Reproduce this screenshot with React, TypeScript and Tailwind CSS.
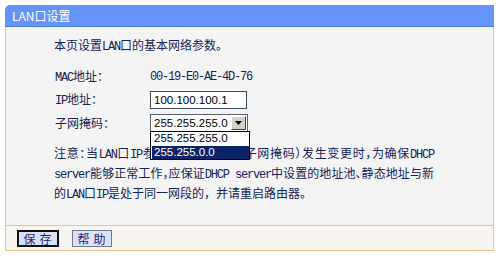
const L = ({ children }: { children: React.ReactNode }) => (
  <span className="font-['Liberation_Mono'] tracking-[-1.2px]">{children}</span>
)

export default function App() {
  return (
    <div className="w-[500px] h-[256px] bg-white pt-[5px] pl-[5px] font-['Noto_Sans_CJK_SC',sans-serif] text-[12px] text-[#14235a] [text-autospace:no-autospace]">
      <div className="w-[489px] flex flex-col">
        {/* 标题栏 */}
        <div className="h-[22px] bg-[#6494f9] rounded-tl-[5px] border-b border-[#4f7fe0] pl-[7px] leading-[21px] text-white text-[12px]">
          LAN口设置
        </div>

        {/* 内容 */}
        <div className="h-[198px] bg-[#f4f4f4] border-l border-r border-[#e9c48e] pl-[48px] pt-[9px]">
          <div className="h-[18px] leading-[18px]">
            本页设置<L>LAN</L>口的基本网络参数。
          </div>

          <div className="mt-[11px] flex flex-col">
            <div className="h-[23px] flex items-center">
              <div className="w-[96px] pl-[1px]"><L>MAC</L>地址：</div>
              <L>00-19-E0-AE-4D-76</L>
            </div>
            <div className="h-[23px] flex items-center">
              <div className="w-[96px] pl-[1px]"><L>IP</L>地址：</div>
              <div className="w-[97px] h-[18px] border border-[#3c4a5c] bg-white pl-[3px] leading-[16px] font-['Liberation_Sans'] text-[11.5px] text-black">
                100.100.100.1
              </div>
            </div>
            <div className="h-[23px] flex items-center">
              <div className="w-[96px] pl-[1px]">子网掩码：</div>
              <div className="relative">
                <div className="w-[98px] h-[18px] border border-[#5a6170] bg-white flex items-center">
                  <span className="flex-1 pl-[3px] leading-[16px] font-['Liberation_Sans'] text-[11.5px] text-black">255.255.255.0</span>
                  <span className="w-[15px] h-[14px] mr-[1px] bg-[#d4d0c8] border border-t-white border-l-white border-r-[#404040] border-b-[#404040] flex items-center justify-center">
                    <svg width="7" height="4" viewBox="0 0 7 4"><path d="M0 0h7L3.5 4z" fill="#000" /></svg>
                  </span>
                </div>
                {/* 展开的下拉列表 */}
                <div className="absolute left-0 top-[17px] w-[100px] border border-black bg-white z-10 font-['Liberation_Sans'] text-[11.5px] leading-[13px]">
                  <div className="h-[14px] pl-[3px] text-black">255.255.255.0</div>
                  <div className="h-[13px] ml-[1px] pl-[2px] bg-[#0a246a] text-white">255.255.0.0</div>
                </div>
              </div>
            </div>
          </div>

          <div className="mt-[10px] leading-[18px] [font-feature-settings:'halt']">
            <div className="w-[380px] text-justify [text-align-last:justify]">
              注意：当<L>LAN</L>口<L>IP</L>参数（包括<L>IP</L>地址、子网掩码）发生变更时，为确保<L>DHCP</L>
            </div>
            <div className="w-[380px] whitespace-nowrap text-justify [text-align-last:justify]">
              <L>server</L>能够正常工作，应保证<L>DHCP server</L>中设置的地址池、静态地址与新
            </div>
            <div className="w-[380px] [font-feature-settings:normal]">
              的<L>LAN</L>口<L>IP</L>是处于同一网段的，并请重启路由器。
            </div>
          </div>
        </div>

        {/* 按钮栏 */}
        <div className="h-[26px] bg-[#f8f5f0] border border-[#e9c48e] flex items-center gap-[13px] pl-[11px]">
          <button className="w-[42px] h-[17px] border-2 border-[#111] bg-[#dce0f8] text-[12px] leading-[13px] text-[#1a2a6a] tracking-[4px] pl-[3px]">
            保存
          </button>
          <button className="w-[40px] h-[17px] border border-[#6b7894] bg-[#dce0f8] text-[12px] leading-[15px] text-[#1a2a6a] tracking-[4px] pl-[3px]">
            帮助
          </button>
        </div>
      </div>
    </div>
  )
}
